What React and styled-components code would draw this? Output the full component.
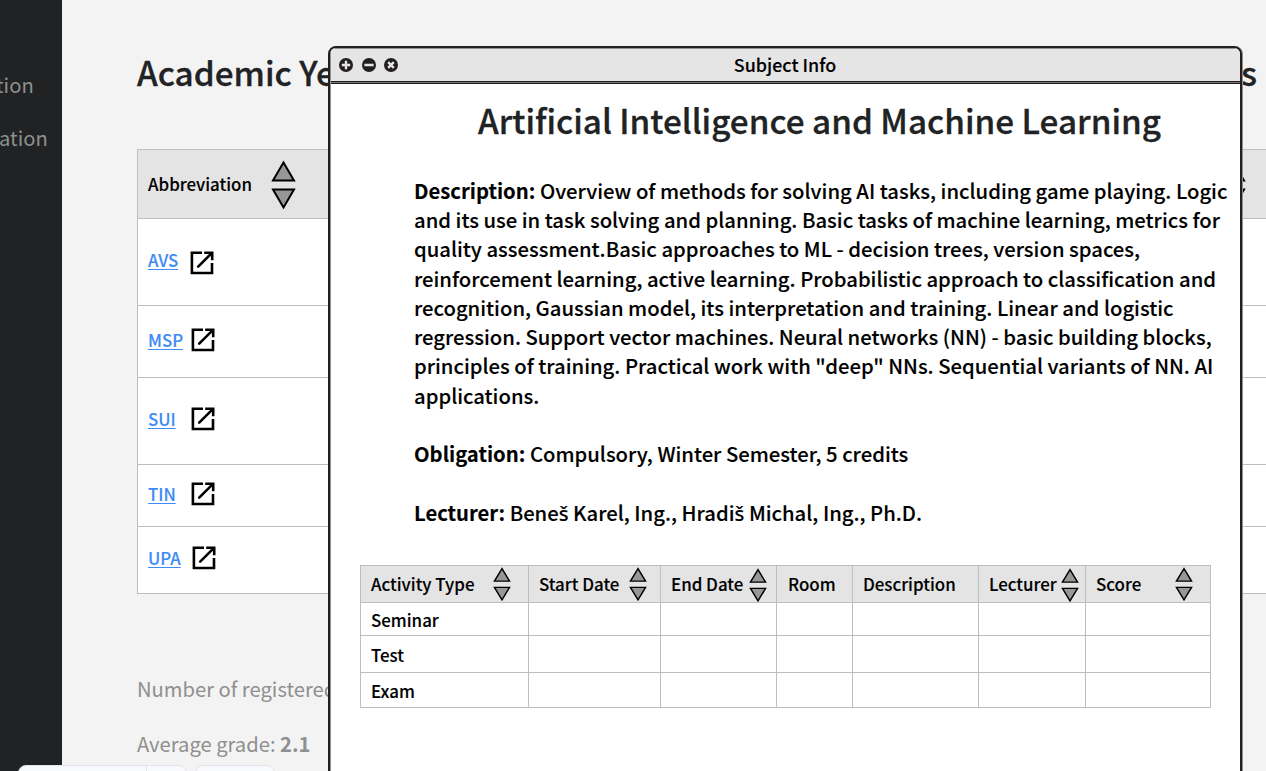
import React from "react";
import styled, { createGlobalStyle } from "styled-components";

const GlobalStyle = createGlobalStyle`
  * { box-sizing: border-box; }
  html, body { margin: 0; padding: 0; overflow: hidden; }
  body, h1, h2, p { font-family: "Noto Sans CJK SC", "Noto Sans", sans-serif; margin: 0; }
`;

const Page = styled.div`
  position: relative;
  display: flex;
  width: 1266px;
  height: 771px;
  overflow: hidden;
  background: #f3f3f3;
  color: #000;
`;

const Sidebar = styled.nav`
  flex: none;
  display: flex;
  flex-direction: column;
  align-items: flex-start;
  width: 62px;
  padding-top: 70px;
  background: #202224;
`;

const NavItem = styled.span`
  height: 53px;
  margin-left: ${(p) => p.$offset}px;
  font-size: 20.2px;
  line-height: 30px;
  color: #8f8f8f;
  white-space: nowrap;
`;

const Main = styled.main`
  flex: 1;
  min-width: 0;
  padding: 48px 0 0 75px;
`;

const HeadingRow = styled.header`
  display: flex;
  justify-content: space-between;
  height: 101px;
  padding-right: 9px;
`;

const Heading = styled.h1`
  font-size: 33.3px;
  line-height: 48px;
  font-weight: 500;
  color: #202224;
  -webkit-text-stroke: 0.3px #202224;
  white-space: nowrap;
`;

const SubjectTable = styled.div`
  border: 1px solid #bebebe;
  border-right: 0;
  background: #fff;
`;

const SubjectHead = styled.div`
  display: flex;
  align-items: center;
  height: 68px;
  padding: 0 20.5px 0 10px;
  background: #e4e4e4;
`;

const Label = styled.span`
  font-size: 16.9px;
  line-height: 24px;
  font-weight: 500;
  -webkit-text-stroke: 0.12px #000;
  white-space: nowrap;
`;

const HeadLabel = styled(Label)`
  width: 123px;
  padding-bottom: 1px;
`;

const HeadSpacer = styled.div`
  flex: 1;
`;

const SubjectRow = styled.div`
  display: flex;
  align-items: flex-start;
  height: ${(p) => p.$height}px;
  padding: ${(p) => p.$top}px 0 0 10px;
  border-top: 1px solid #bebebe;
`;

const SubjectLink = styled.a`
  width: ${(p) => p.$width}px;
  margin-top: ${(p) => p.$drop}px;
  font-size: 16.8px;
  line-height: 24px;
  font-weight: 500;
  color: #3e8bf5;
  -webkit-text-stroke: 0.12px #3e8bf5;
  text-decoration: underline;
  text-decoration-thickness: 1px;
  text-underline-offset: 2px;
`;

const Summary = styled.p`
  margin-top: ${(p) => p.$gap}px;
  font-size: 20.2px;
  line-height: 30px;
  color: #8f8f8f;
  white-space: nowrap;
`;

const Window = styled.section`
  position: absolute;
  left: 328px;
  top: 46px;
  width: 914px;
  height: 760px;
  padding-left: 1px;
  border: 2px solid #231f20;
  border-radius: 8px;
  background: #fff;
  box-shadow: 1px 0 0 #918f90, inset 1px 0 0 #918f90;
  overflow: hidden;
`;

const TitleBar = styled.header`
  display: grid;
  grid-template-columns: 120px 1fr 120px;
  align-items: center;
  height: 36px;
  padding: 0 4px 2px 8px;
  border-bottom: 1px solid #231f20;
  background: #e5e5e5;
  box-shadow: inset 0 1px 0 #918f90, inset 0 -1px 0 #77757a, inset 0 -2px 0 #231f20;
`;

const Controls = styled.div`
  display: flex;
  gap: 8.5px;
  padding-top: 1px;
`;

const WindowTitle = styled.span`
  font-size: 17.9px;
  line-height: 26px;
  font-weight: 500;
  -webkit-text-stroke: 0.12px #000;
  text-align: center;
  padding: 0 5px 2px 0;
`;

const SubjectTitle = styled.h2`
  margin: 12px 0 0 147px;
  font-size: 33.25px;
  line-height: 48px;
  font-weight: 500;
  color: #202224;
  -webkit-text-stroke: 0.3px #202224;
  white-space: nowrap;
`;

const Details = styled.div`
  display: flex;
  flex-direction: column;
  gap: 29.4px;
  padding: 31.75px 0 0 83px;
`;

const Paragraph = styled.p`
  font-size: 20.26px;
  line-height: 29.25px;
  font-weight: 500;
  -webkit-text-stroke: 0.12px #000;
  white-space: pre;
`;

const Accented = styled.span`
  font-family: "Noto Sans", "Open Sans", sans-serif;
  line-height: 1;
`;

const ActivityTable = styled.div`
  display: grid;
  grid-template-columns: 168px 132px 116px 76px 126px 107px 125px;
  grid-template-rows: 37px 33px 37px 35px;
  width: 851px;
  margin: 38px 0 0 29px;
  border: solid #bebebe;
  border-width: 1px 0 0 1px;
`;

const Cell = styled.div`
  display: flex;
  align-items: center;
  justify-content: space-between;
  padding: ${(p) => (p.$head ? 0 : 2)}px ${(p) => p.$end || 0}px 0 ${(p) => p.$start || 10}px;
  border: solid #bebebe;
  border-width: 0 1px 1px 0;
  background: ${(p) => (p.$head ? "#e4e4e4" : "#fff")};
`;

const Dock = styled.div`
  position: absolute;
  left: 18px;
  top: 765px;
  display: flex;
  gap: 8px;
`;

const DockPill = styled.div`
  display: flex;
  width: ${(p) => p.$width}px;
  height: 30px;
  border: 1px solid #e3e4e9;
  border-radius: 8px;
  background: #f8f9fc;
`;

const DockSlot = styled.div`
  width: 128px;
  border-right: 1px solid #e3e4e9;
`;

const SortSvg = styled.svg`
  flex: none;
  display: block;
  width: ${(p) => (p.$large ? 25 : 18)}px;
  height: ${(p) => (p.$large ? 49 : 34)}px;
  margin-top: ${(p) => p.$shift || 0}px;
`;

function SortIcon({ large, shift }) {
  return (
    <SortSvg $large={large} $shift={shift} viewBox="0 0 25 49" preserveAspectRatio="none" fill="#979797" stroke="#000" strokeWidth="2">
      <path d="M12.5 2.4 L23 20.4 H2 Z" />
      <path d="M12.5 47.4 L23 29.4 H2 Z" />
    </SortSvg>
  );
}

function OpenIcon() {
  return (
    <svg width="24" height="24" viewBox="0 0 24 24" fill="none" stroke="#000" strokeWidth="2.6">
      <path d="M12 1.7 H1.9 V22 H22 V12" />
      <path d="M14.2 1.7 H22.2 V9.2" />
      <path d="M18 1 H23 V6 Z" fill="#000" stroke="none" />
      <path d="M8.2 15.6 L21.5 2.3" strokeLinecap="round" />
    </svg>
  );
}

const glyphs = {
  plus: "M7 2.8 V11.2 M2.8 7 H11.2",
  minus: "M2.4 7 H11.6",
  close: "M4.2 4.2 L9.8 9.8 M9.8 4.2 L4.2 9.8",
};

function ControlIcon({ kind }) {
  return (
    <svg width="14" height="14" viewBox="0 0 14 14">
      <circle cx="7" cy="7" r="7" fill="#231f20" />
      <path d={glyphs[kind]} stroke="#e5e5e5" strokeWidth="2.4" />
    </svg>
  );
}

const subjects = [
  { code: "AVS", height: 87, top: 32, drop: -3, width: 42 },
  { code: "MSP", height: 72, top: 22, drop: 0, width: 43 },
  { code: "SUI", height: 87, top: 29, drop: 0, width: 43 },
  { code: "TIN", height: 62, top: 17, drop: 0, width: 43 },
  { code: "UPA", height: 67, top: 19, drop: 0, width: 44 },
];

const columns = [
  { name: "Activity Type", end: 17 },
  { name: "Start Date", end: 13 },
  { name: "End Date", end: 9, shift: 2 },
  { name: "Room", start: 11, plain: true },
  { name: "Description", plain: true },
  { name: "Lecturer", end: 6, shift: 2 },
  { name: "Score", end: 17 },
];

const description = `Overview of methods for solving AI tasks, including game playing. Logic
and its use in task solving and planning. Basic tasks of machine learning, metrics for
quality assessment.Basic approaches to ML - decision trees, version spaces,
reinforcement learning, active learning. Probabilistic approach to classification and
recognition, Gaussian model, its interpretation and training. Linear and logistic
regression. Support vector machines. Neural networks (NN) - basic building blocks,
principles of training. Practical work with "deep" NNs. Sequential variants of NN. AI
applications.`;

export default function App() {
  return (
    <Page>
      <GlobalStyle />
      <Sidebar>
        <NavItem $offset={-4}>tion</NavItem>
        <NavItem $offset={-1}>ation</NavItem>
      </Sidebar>
      <Main>
        <HeadingRow>
          <Heading>Academic Year</Heading>
          <Heading>s</Heading>
        </HeadingRow>
        <SubjectTable>
          <SubjectHead>
            <HeadLabel>Abbreviation</HeadLabel>
            <SortIcon large />
            <HeadSpacer />
            <SortIcon large />
          </SubjectHead>
          {subjects.map((s) => (
            <SubjectRow key={s.code} $height={s.height} $top={s.top}>
              <SubjectLink $width={s.width} $drop={s.drop}>{s.code}</SubjectLink>
              <OpenIcon />
            </SubjectRow>
          ))}
        </SubjectTable>
        <Summary $gap={80}>Number of registered</Summary>
        <Summary $gap={25}>Average grade: <b>2.1</b></Summary>
      </Main>
      <Window>
        <TitleBar>
          <Controls>
            <ControlIcon kind="plus" />
            <ControlIcon kind="minus" />
            <ControlIcon kind="close" />
          </Controls>
          <WindowTitle>Subject Info</WindowTitle>
        </TitleBar>
        <SubjectTitle>Artificial Intelligence and Machine Learning</SubjectTitle>
        <Details>
          <Paragraph><b>Description:</b> {description}</Paragraph>
          <Paragraph><b>Obligation:</b> Compulsory, Winter Semester, 5 credits</Paragraph>
          <Paragraph>
            <b>Lecturer:</b> Bene<Accented>š</Accented> Karel, Ing., Hradi<Accented>š</Accented> Michal, Ing., Ph.D.
          </Paragraph>
        </Details>
        <ActivityTable>
          {columns.map((c) => (
            <Cell key={c.name} $head $start={c.start} $end={c.end}>
              <Label>{c.name}</Label>
              {!c.plain && <SortIcon shift={c.shift} />}
            </Cell>
          ))}
          {["Seminar", "Test", "Exam"].map((name) =>
            columns.map((c, i) => (
              <Cell key={name + c.name}>{i === 0 && <Label>{name}</Label>}</Cell>
            ))
          )}
        </ActivityTable>
      </Window>
      <Dock>
        <DockPill $width={169}><DockSlot /></DockPill>
        <DockPill $width={80} />
      </Dock>
    </Page>
  );
}
